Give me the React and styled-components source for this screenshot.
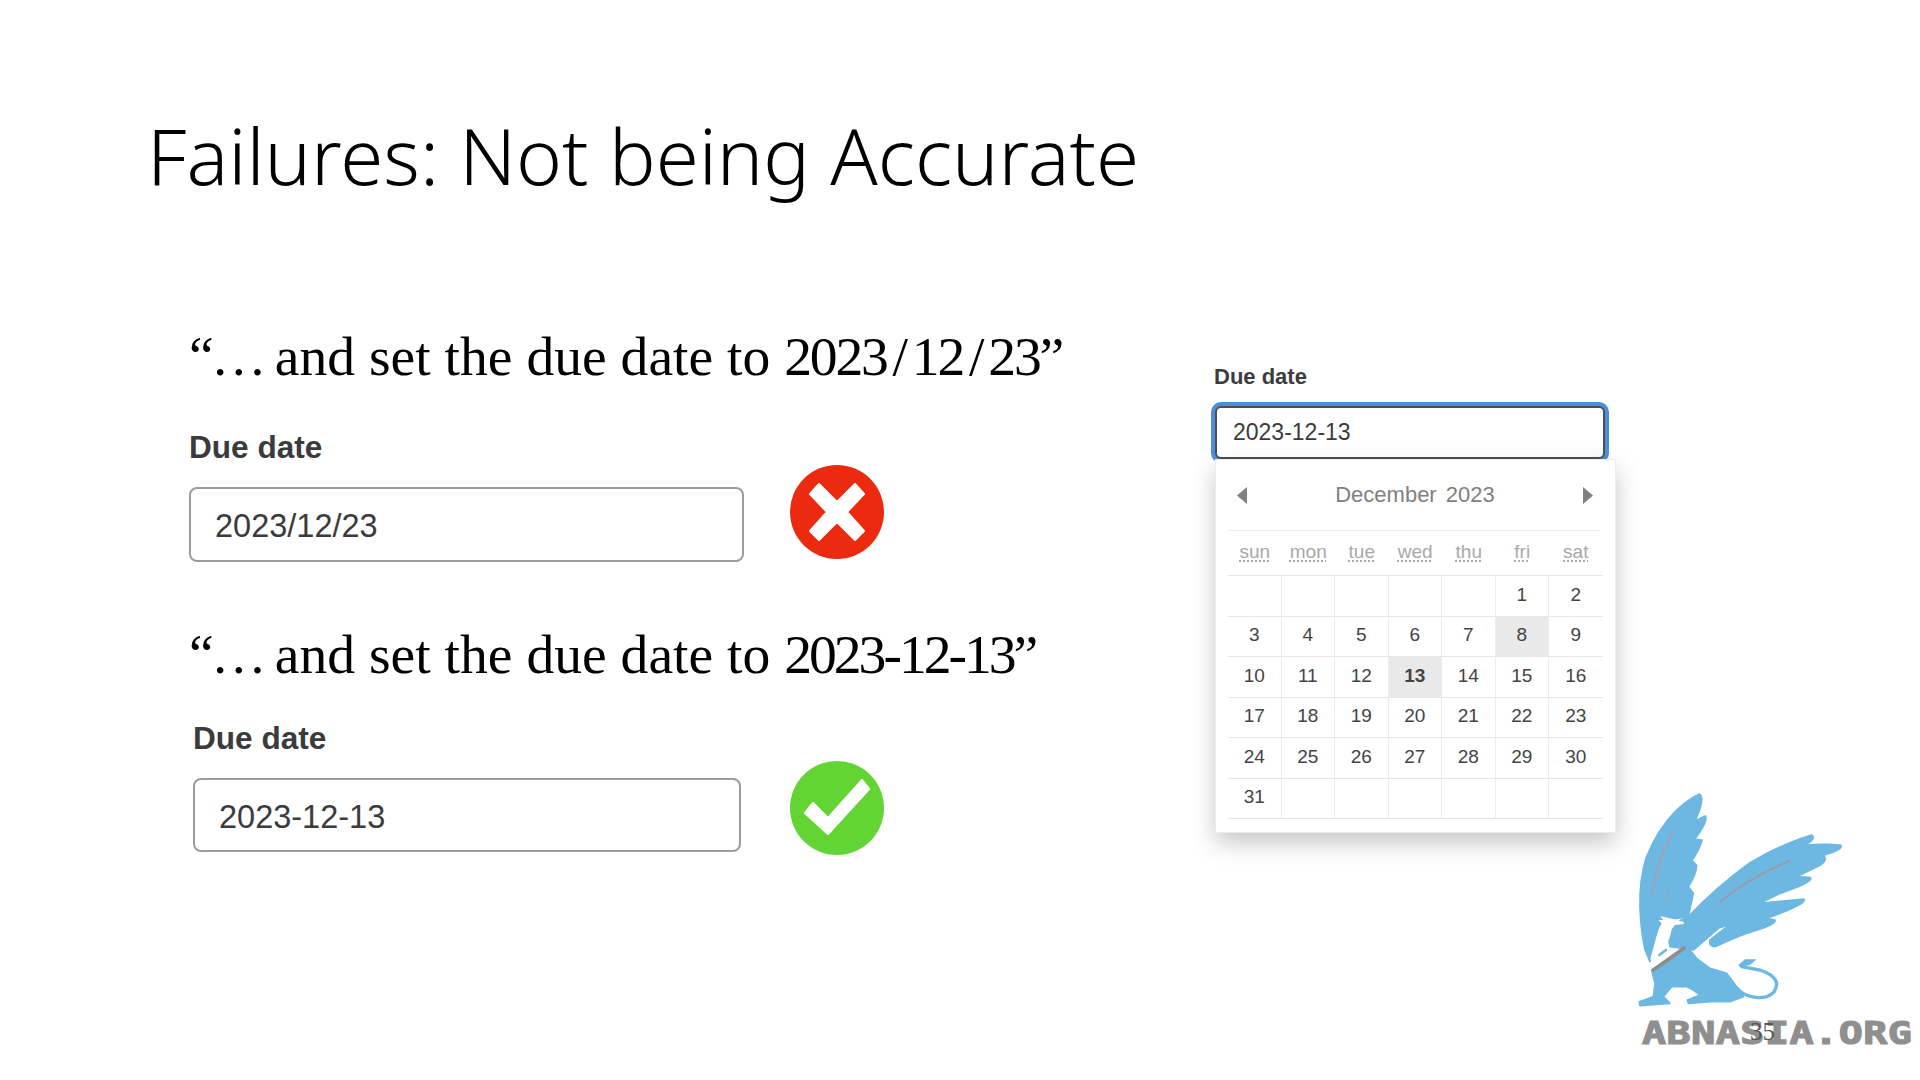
import React from 'react';
import styled, { createGlobalStyle } from 'styled-components';

const GlobalStyle = createGlobalStyle`
    html, body {
        margin: 0;
        padding: 0;
        background: #fff;
    }
`;

const Slide = styled.div`
    position: relative;
    width: 1920px;
    height: 1080px;
    overflow: hidden;
    background: #fff;
    color: #000;
    padding: 103px 0 0 147px;
    box-sizing: border-box;
`;

const Title = styled.h1`
    margin: 0;
    height: 116px;
    font-family: "Noto Sans", sans-serif;
    font-weight: 300;
    font-size: 78px;
    line-height: 104px;
`;

const Columns = styled.div`
    display: flex;
    align-items: flex-start;
`;

const Examples = styled.section`
    width: 1068px;
    padding: 107px 0 0 42px;
    box-sizing: border-box;
`;

const Quote = styled.p`
    margin: 0;
    height: 60px;
    font-family: "Liberation Serif", serif;
    font-size: 55.6px;
    line-height: 60px;
    white-space: nowrap;
`;

const Lead = styled.span`
    letter-spacing: -2.8px;
`;

const DateText = styled.span`
    letter-spacing: ${p => p.$tight}px;
`;

const Slash = styled.span`
    margin: 0 6px;
    font-weight: 300;
`;

const ExampleRow = styled.div`
    display: flex;
    align-items: flex-start;
    box-sizing: border-box;
    height: ${p => p.$height}px;
    padding-top: ${p => p.$top}px;
    padding-left: ${p => p.$inset}px;
`;

const Field = styled.div`
    width: ${p => p.$width}px;
    flex: none;
`;

const FieldLabel = styled.div`
    font-family: "Liberation Sans", sans-serif;
    font-weight: 700;
    font-size: 31.6px;
    line-height: 36px;
    color: #3b3b3d;
    margin-bottom: 22px;
`;

const DateInput = styled.div`
    width: ${p => p.$width}px;
    height: ${p => p.$height}px;
    box-sizing: border-box;
    border: 2px solid #9c9c9c;
    border-radius: 8px;
    padding: 2px 0 0 24px;
    font-family: "Liberation Sans", sans-serif;
    font-size: 32.5px;
    line-height: ${p => p.$height - 4}px;
    color: #3b3b3d;
`;

const StatusIcon = styled.svg`
    flex: none;
    width: 94px;
    height: 94px;
    margin-top: ${p => p.$top}px;
    display: block;
`;

const PickerColumn = styled.section`
    width: 405px;
    padding-top: 145px;
`;

const PickerLabel = styled.div`
    font-family: "Liberation Sans", sans-serif;
    font-weight: 700;
    font-size: 22px;
    line-height: 26px;
    color: #3c3c3e;
    margin-bottom: 16px;
    margin-left: -1px;
`;

const PickerInput = styled.div`
    width: 390px;
    height: 53px;
    box-sizing: border-box;
    border: 2px solid #4f4f52;
    border-radius: 6px;
    box-shadow: 0 0 0 4px #4a90d9;
    padding-left: 16px;
    background: #fff;
    font-family: "Liberation Sans", sans-serif;
    font-size: 23px;
    line-height: 49px;
    color: #3b3b3d;
`;

const Popup = styled.div`
    position: relative;
    width: 401px;
    height: 374px;
    box-sizing: border-box;
    padding: 0 15px 0 12px;
    background: #fff;
    border: 1px solid #ececec;
    box-shadow: 0 10px 22px rgba(0, 0, 0, 0.22);
`;

const MonthBar = styled.div`
    display: flex;
    align-items: center;
    justify-content: space-between;
    height: 70px;
    padding: 0 7px 0 9px;
    border-bottom: 1px solid #ececec;
`;

const MonthName = styled.span`
    font-family: "Liberation Sans", sans-serif;
    font-size: 22px;
    color: #808080;
    word-spacing: 3px;
`;

const Arrow = styled.svg`
    width: 10px;
    height: 17px;
    display: block;
`;

const CalendarGrid = styled.div`
    display: grid;
    grid-template-columns: repeat(7, 53.5px);
`;

const WeekDay = styled.div`
    height: 45px;
    display: flex;
    align-items: center;
    justify-content: center;
    box-sizing: border-box;
    padding-bottom: 2px;
    border-bottom: 1px solid #e6e6e6;
    font-family: "Liberation Sans", sans-serif;
    font-size: 19px;
    color: #a8a8a8;
    text-decoration: underline dotted #a8a8a8;
    text-underline-offset: 3px;
`;

const Day = styled.div`
    height: 40.5px;
    display: flex;
    align-items: center;
    justify-content: center;
    box-sizing: border-box;
    padding-bottom: 2px;
    border-bottom: 1px solid #e6e6e6;
    border-right: ${p => (p.$last ? 'none' : '1px solid #ececec')};
    background: ${p => (p.$marked ? '#e9e9ea' : 'transparent')};
    font-family: "Liberation Sans", sans-serif;
    font-size: 19px;
    font-weight: ${p => (p.$bold ? 700 : 400)};
    color: #444;
`;

const LogoBox = styled.div`
    position: absolute;
    left: 1620px;
    top: 780px;
    width: 300px;
    height: 280px;
`;

const LogoArt = styled.svg`
    display: block;
    width: 300px;
    height: 280px;
`;

const LogoText = styled.div`
    position: absolute;
    left: 22px;
    top: 234px;
    font-family: "DejaVu Sans Mono", monospace;
    font-weight: 700;
    font-size: 32px;
    line-height: 38px;
    letter-spacing: 0.4px;
    color: #8f8f8f;
    white-space: nowrap;
    transform: scaleX(1.25);
    transform-origin: left center;
    -webkit-text-stroke: 1.2px #8f8f8f;
`;

const PageNumber = styled.div`
    position: absolute;
    left: 130px;
    top: 237px;
    font-family: "Liberation Serif", serif;
    font-size: 25px;
    line-height: 30px;
    color: #555;
`;

const WEEK_DAYS = ['sun', 'mon', 'tue', 'wed', 'thu', 'fri', 'sat'];
const LEADING_BLANKS = 5;
const MONTH_DAYS = 31;
const TRAILING_BLANKS = 6;

const calendarCells = () => {
    const cells = [];
    for (let i = 0; i < LEADING_BLANKS; i++) cells.push(null);
    for (let d = 1; d <= MONTH_DAYS; d++) cells.push(d);
    for (let i = 0; i < TRAILING_BLANKS; i++) cells.push(null);
    return cells;
};

const WrongIcon = () => (
    <StatusIcon viewBox="0 0 94 94" $top={36}>
        <circle cx="47" cy="47" r="47" fill="#ec2a10" />
        <path d="M20 29 L29 19 L47 37 L65 19 L74 29 L57 47 L74 66 L65 75 L47 57 L29 75 L20 66 L37 47 Z" fill="#fff" stroke="#fff" strokeWidth="2" strokeLinejoin="round" />
    </StatusIcon>
);

const RightIcon = () => (
    <StatusIcon viewBox="0 0 94 94" $top={41}>
        <circle cx="47" cy="47" r="47" fill="#62d534" />
        <path d="M14 52 L23 41 L38 56 L72 18 L80 28 L38 74 Z" fill="#fff" stroke="#fff" strokeWidth="1" strokeLinejoin="round" />
    </StatusIcon>
);

const Griffin = () => (
    <LogoArt viewBox="0 0 900 840">
        <g fill="#6cb8e2" stroke="#6cb8e2" strokeWidth="5" strokeLinejoin="round">
            <path d="M90 545 L75 510 Q62 450 60 380 Q58 300 78 235 Q110 150 170 90 Q205 58 238 42 Q252 50 238 92 L226 122 L256 108 Q264 118 240 155 L224 178 L246 180 Q240 205 216 242 L230 256 Q228 285 205 320 L220 340 L205 410 L140 420 L110 460 Z" />
            <path d="M205 410 Q290 320 390 248 Q490 190 575 165 Q590 175 555 196 Q620 190 662 196 Q672 208 610 226 Q625 240 600 256 L530 290 L572 293 Q578 308 480 340 L420 370 L552 357 Q562 372 440 415 L465 420 Q470 435 380 460 L330 480 L285 500 Q266 500 270 480 L330 433 L295 445 L220 510 L150 500 L140 440 Z" />
            <path d="M95 570 L205 505 L230 535 L270 565 L320 580 L350 620 L370 640 L370 650 L330 665 L270 665 L205 670 L202 660 L240 645 L220 630 L200 620 L155 620 L130 650 L150 670 L60 677 L58 665 L100 650 L105 610 Z" />
        </g>
        <path d="M360 635 Q400 660 440 650 Q470 640 470 610 Q465 585 420 570 L365 560" fill="none" stroke="#6cb8e2" strokeWidth="10" strokeLinecap="round" />
        <path d="M355 555 L375 538 L410 538 L390 555 L360 562 Z" fill="#6cb8e2" />
        <path d="M120 408 L150 415 L190 425 L192 432 L165 435 L155 448 L150 470 L140 495 L135 510 L115 520 L90 540 L115 450 L125 430 L115 420 L130 420 Z" fill="#fff" />
        <path d="M118 525 L138 510" fill="none" stroke="#6cb8e2" strokeWidth="8" strokeLinecap="round" />
        <path d="M157 160 Q115 235 95 340" fill="none" stroke="#a59fb0" strokeWidth="6" strokeLinecap="round" />
        <path d="M147 330 L135 362" fill="none" stroke="#a59fb0" strokeWidth="4" strokeLinecap="round" />
        <path d="M300 365 Q400 285 510 242" fill="none" stroke="#9a9aa8" strokeWidth="6" strokeLinecap="round" />
        <path d="M97 572 L196 502" fill="none" stroke="#8d8d8d" strokeWidth="11" />
    </LogoArt>
);

const App = () => (
    <Slide>
        <GlobalStyle />
        <Title>Failures: Not being Accurate</Title>
        <Columns>
            <Examples>
                <Quote><Lead>“… </Lead>and set the due date to <DateText $tight={-2.2}>2023<Slash>/</Slash>12<Slash>/</Slash>23”</DateText></Quote>
                <ExampleRow $height={238} $top={43} $inset={0}>
                    <Field $width={601}>
                        <FieldLabel>Due date</FieldLabel>
                        <DateInput $width={555} $height={75}>2023/12/23</DateInput>
                    </Field>
                    <WrongIcon />
                </ExampleRow>
                <Quote><Lead>“… </Lead>and set the due date to <DateText $tight={-3}>2023-12-13”</DateText></Quote>
                <ExampleRow $height={240} $top={36} $inset={4}>
                    <Field $width={597}>
                        <FieldLabel>Due date</FieldLabel>
                        <DateInput $width={548} $height={74}>2023-12-13</DateInput>
                    </Field>
                    <RightIcon />
                </ExampleRow>
            </Examples>
            <PickerColumn>
                <PickerLabel>Due date</PickerLabel>
                <PickerInput>2023-12-13</PickerInput>
                <Popup>
                    <MonthBar>
                        <Arrow viewBox="0 0 10 17"><path d="M10 0 V17 L0 8.5 Z" fill="#808080" /></Arrow>
                        <MonthName>December 2023</MonthName>
                        <Arrow viewBox="0 0 10 17"><path d="M0 0 V17 L10 8.5 Z" fill="#808080" /></Arrow>
                    </MonthBar>
                    <CalendarGrid>
                        {WEEK_DAYS.map(d => <WeekDay key={d}>{d}</WeekDay>)}
                        {calendarCells().map((d, i) => (
                            <Day
                                key={i}
                                $last={i % 7 === 6}
                                $marked={d === 8 || d === 13}
                                $bold={d === 13}
                            >
                                {d}
                            </Day>
                        ))}
                    </CalendarGrid>
                </Popup>
            </PickerColumn>
        </Columns>
        <LogoBox>
            <Griffin />
            <LogoText>ABNASIA.ORG</LogoText>
            <PageNumber>35</PageNumber>
        </LogoBox>
    </Slide>
);

export default App;
